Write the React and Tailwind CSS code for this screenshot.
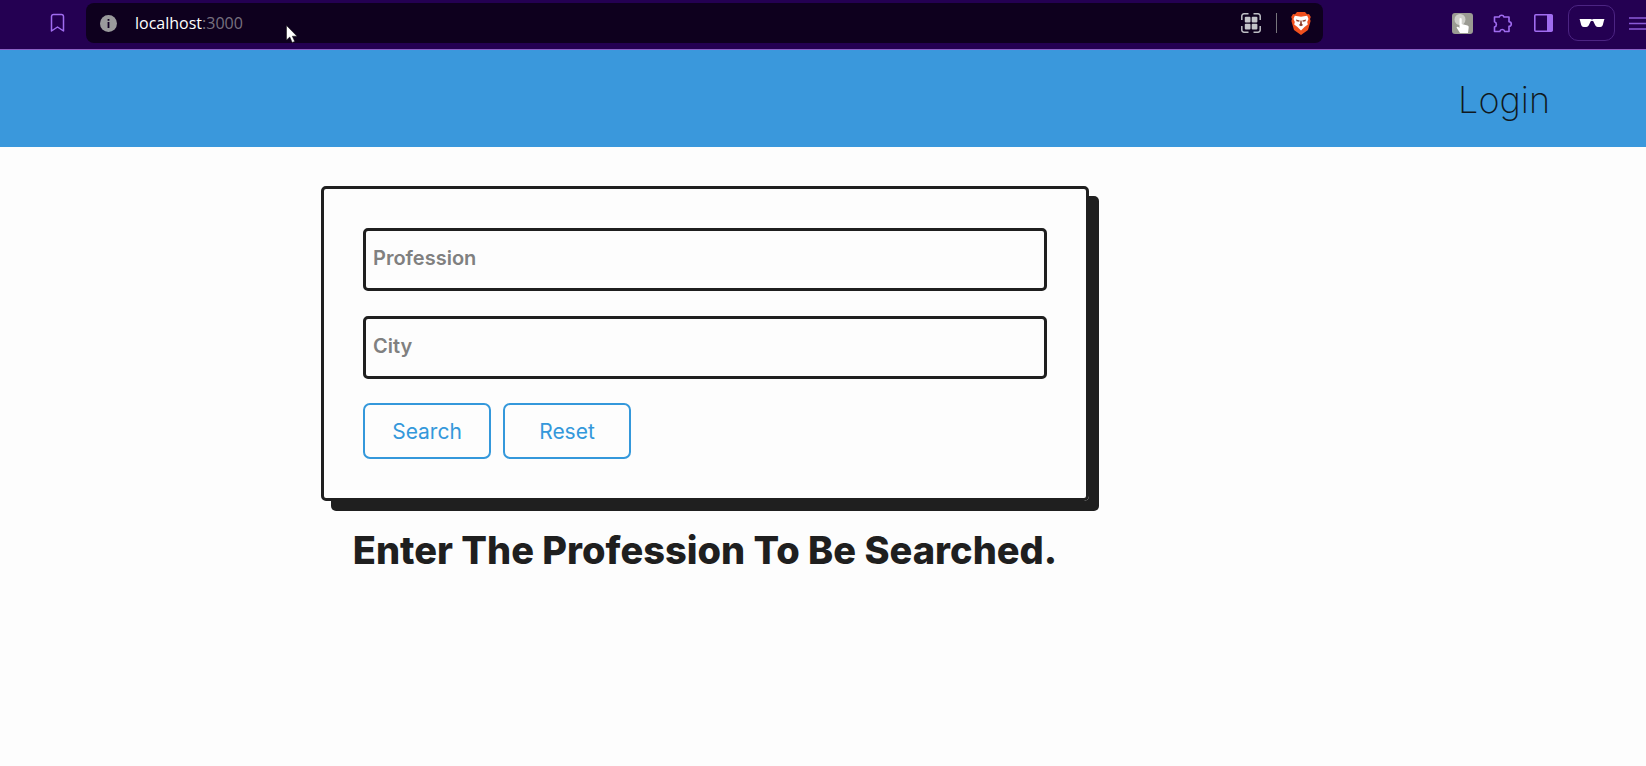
import React from "react";

const BookmarkIcon = () => (
  <svg className="size-5" viewBox="0 0 20 20" fill="none" stroke="#a06cf0" strokeWidth="1.5" strokeLinejoin="round">
    <path d="M5.500 1.500h7.500a2 2 0 0 1 2.500 2v14.500l-6-4-6 4V3.500a2 2 0 0 1 2-2z" />
  </svg>
);

const InfoIcon = () => (
  <svg className="size-[17px]" viewBox="0 0 17 17">
    <circle cx="8.500" cy="8.500" r="8.500" fill="#9a9a9c" />
    <rect x="7.600" y="7" width="1.800" height="6" fill="#120024" />
    <rect x="7.600" y="4" width="1.800" height="1.800" fill="#120024" />
  </svg>
);

const QrIcon = () => (
  <svg className="size-5" viewBox="0 0 20 20" fill="none" stroke="#bdbdc4" strokeWidth="1.500">
    <path d="M.8 7V3a2.200 2.200 0 0 1 2.200-2.200h4.500M12.500 .8h4.500A2.200 2.200 0 0 1 19.200 3v4M19.200 13v4a2.200 2.200 0 0 1-2.200 2.200h-4.500M7.500 19.200H3A2.200 2.200 0 0 1 .8 17v-4" />
    <g fill="#c4c4ca" stroke="none">
      <rect x="3.800" y="3.800" width="5.700" height="5.700" rx="1" />
      <rect x="10.700" y="3.800" width="5.700" height="5.700" rx="1" />
      <rect x="3.800" y="10.700" width="5.700" height="5.700" rx="1" />
      <rect x="10.700" y="10.700" width="5.700" height="5.700" rx="1" />
    </g>
  </svg>
);

const BraveIcon = () => (
  <svg className="h-[23px] w-5" viewBox="0 0 20 23">
    <path d="M6 0h8l2 2.200 2-.2 1.800 3-.8 2 .6 2-2.600 9L10 23l-7-5L.4 9 1 7 .2 5 2 2l2 .2z" fill="#f0501e" />
    <path d="M7 4.200l3 .6 3-.6 3.200-.4 1.300 3.200-1.300 3 .6 2.500-3.300 2.500L10 18.500 6.500 15l-3.300-2.500.6-2.500-1.300-3 1.300-3.200z" fill="#fff" />
    <path d="M5 7.500l3.700 1-.5 1.300-2.700-.6zM15 7.500l-3.700 1 .5 1.300 2.700-.6zM9.400 8.500h1.200l.3 3.500 1.300 1L10 14.200 7.800 13l1.300-1z" fill="#8a3a26" />
  </svg>
);

const HandIcon = () => (
  <svg className="size-[21px]" viewBox="0 0 21 21">
    <rect width="21" height="21" rx="3" fill="#9b9b93" />
    <circle cx="8" cy="6.500" r="5.500" fill="#cfcfca" />
    <path d="M7.500 5.500q1.200-1 2.200.2v5.300l5.800 1.500q1.500.5 1.200 2L16 20H8L4.500 14.500q.8-1.400 2.200-.3l.8.8z" fill="#fff" />
  </svg>
);

const PuzzleIcon = () => (
  <svg className="size-5" viewBox="0 0 20 20" fill="none" stroke="#a06cf0" strokeWidth="1.600" strokeLinejoin="round">
    <path d="M1.500 4h4.700a2.500 2.500 0 0 1 4.800 0h5v4.800a2.300 2.300 0 0 1 0 4.600v5.100h-4.300a2.500 2.500 0 0 0-4.900 0H1.500v-4.400a2.800 2.800 0 0 0 0-5.300z" />
  </svg>
);

const PanelIcon = () => (
  <svg className="h-[18px] w-[19px]" viewBox="0 0 19 18">
    <rect x=".8" y=".8" width="17.400" height="16.400" rx="1" fill="none" stroke="#a06cf0" strokeWidth="1.600" />
    <rect x="13" y="1" width="5.500" height="16" fill="#a06cf0" />
  </svg>
);

const GlassesIcon = () => (
  <svg className="h-[10px] w-[26px]" viewBox="0 0 26 10" fill="#fff">
    <path d="M.5 1h11L13 1.500 14.500 1h11l-.4 1-1.300 5q-.5 2-2.500 2h-2.600q-1.700 0-2.500-1.700L14.300 3.200q-1.300-.8-2.600 0L9.800 7.300Q9 9 7.300 9H4.700q-2 0-2.500-2L.9 2z" />
  </svg>
);

const MenuIcon = () => (
  <svg className="h-[13px] w-5" viewBox="0 0 20 13" stroke="#8a5ad8" strokeWidth="1.500">
    <path d="M0 1h20M0 6.500h20M0 12h20" />
  </svg>
);

const MousePointer = () => (
  <svg className="pointer-events-none absolute left-[286px] top-[25px] h-[18px] w-[12px]" viewBox="0 0 12 18">
    <path d="M.5.500v14.500l3.300-3 2.400 5.500 2.500-1.100-2.400-5.200h4.700z" fill="#fff" stroke="#111" strokeWidth=".5" />
  </svg>
);

function BrowserBar() {
  return (
    <div className="relative flex h-[50px] items-center overflow-hidden border-b border-[#8a63c4] bg-[#240052] pb-[3px]">
      <button aria-label="Bookmark" className="ml-12 shrink-0"><BookmarkIcon /></button>
      <div className="ml-[18px] flex h-10 min-w-0 grow items-center rounded-lg bg-[#0e001e] pl-[14px] pr-3">
        <button aria-label="Site information"><InfoIcon /></button>
        <a
          href="#top"
          className="ml-[18px] font-['Open_Sans',sans-serif] text-[16px] leading-6 text-[#77717f]"
        >
          <span className="text-white">localhost</span>:3000
        </a>
        <div className="ml-auto flex items-center">
          <button aria-label="Apps"><QrIcon /></button>
          <span className="ml-[15px] h-5 w-px bg-[#77757c]" />
          <button aria-label="Shields" className="ml-[14px]"><BraveIcon /></button>
        </div>
      </div>
      <div className="ml-[129px] flex shrink-0 items-center">
        <button aria-label="Pointer extension"><HandIcon /></button>
        <button aria-label="Extensions" className="ml-5"><PuzzleIcon /></button>
        <button aria-label="Side panel" className="ml-[21px]"><PanelIcon /></button>
        <button aria-label="Profile" className="ml-[15px] flex h-9 w-[47px] items-center justify-center rounded-[10px] border border-[#4c2483]"><GlassesIcon /></button>
        <button aria-label="Menu" className="-mr-[3px] ml-[14px]"><MenuIcon /></button>
      </div>
      <MousePointer />
    </div>
  );
}

function Field({ label, id }) {
  return (
    <input
      id={id}
      aria-label={label}
      placeholder={label}
      className="block h-[63px] w-full rounded-[5px] border-[3px] border-[#1f1f1f] bg-transparent px-[7px] pb-1 text-[20px] font-semibold text-[#1f1f1f] outline-none placeholder:text-[#808080]"
    />
  );
}

const buttonClass =
  "h-14 w-32 rounded-[7px] border-2 border-[#3498db] pt-0.5 text-[21px] text-[#3498db]";

export default function App() {
  return (
    <div className="min-h-screen bg-[#fdfdfd] font-['Inter',sans-serif] text-[#1f1f1f]">
      <BrowserBar />
      <header className="flex h-[97px] items-center justify-end bg-[#3a98dc] pr-24 pt-0.5">
        <a href="#login" className="text-[36px] font-extralight text-[#101820]">Login</a>
      </header>
      <main className="flex flex-col items-center pr-[236px] pt-[39px]">
        <form
          onSubmit={(e) => e.preventDefault()}
          className="w-full max-w-3xl rounded-[5px] border-[3px] border-[#1f1f1f] p-[39px] shadow-[10px_10px_0_#1f1f1f]"
        >
          <div className="flex flex-col gap-[25px]">
            <Field id="profession" label="Profession" />
            <Field id="city" label="City" />
          </div>
          <div className="mt-6 flex gap-3">
            <button type="submit" className={buttonClass}>Search</button>
            <button type="reset" className={buttonClass}>Reset</button>
          </div>
        </form>
        <h1 className="mt-6 text-[38px] font-extrabold leading-[50px]">
          Enter The Profession To Be Searched.
        </h1>
      </main>
    </div>
  );
}
